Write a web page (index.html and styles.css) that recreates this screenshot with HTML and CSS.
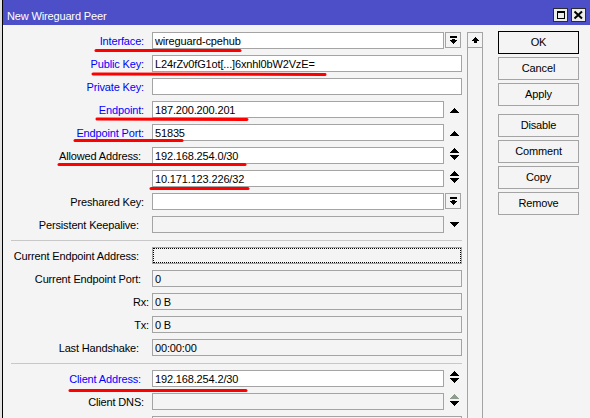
FILE: index.html
```html
<!DOCTYPE html>
<html lang="en">
<head>
<meta charset="utf-8">
<title>New Wireguard Peer</title>
<link rel="stylesheet" href="styles.css">
</head>
<body>
<div class="desk">
  <div class="win">
    <div class="titlebar">
      <span class="title">New Wireguard Peer</span>
      <div class="tbtns">
        <span class="tbtn">
          <svg width="13" height="12" viewBox="0 0 13 12" shape-rendering="crispEdges">
            <rect x="3.5" y="2.5" width="7" height="7" fill="none" stroke="#000"/>
            <rect x="3" y="2" width="8" height="2" fill="#000"/>
          </svg>
        </span>
        <span class="tbtn">
          <svg width="13" height="12" viewBox="0 0 13 12">
            <path d="M2.5 2.5L10 9.5M10 2.5L2.5 9.5" stroke="#000" stroke-width="2" fill="none"/>
          </svg>
        </span>
      </div>
    </div>

    <div class="content">
      <div class="form">
        <div class="row">
          <span class="lbl blue">Interface:</span>
          <div class="field"><span class="inp">wireguard-cpehub</span>
            <span class="side"><span class="dd"><svg width="7" height="8" viewBox="0 0 7 8" shape-rendering="crispEdges"><path d="M0 0h7v2H0z M2 3h3v1H2z M0 4h7v1h-1v1h-1v1h-1v1h-1v-1h-1v-1h-1v-1H0z"/></svg></span></span>
          </div>
        </div>
        <div class="row">
          <span class="lbl blue">Public Key:</span>
          <div class="field"><span class="inp">L24rZv0fG1ot[...]6xnhl0bW2VzE=</span></div>
        </div>
        <div class="row">
          <span class="lbl blue">Private Key:</span>
          <div class="field"><span class="inp"></span></div>
        </div>
        <div class="row">
          <span class="lbl blue">Endpoint:</span>
          <div class="field"><span class="inp">187.200.200.201</span>
            <span class="side"><svg class="arr" width="9" height="17" viewBox="0 0 9 17" shape-rendering="crispEdges"><path d="M4 7h1v1h1v1h1v1h1v1h1v1H0v-1h1v-1h1v-1h1v-1h1z"/></svg></span>
          </div>
        </div>
        <div class="row">
          <span class="lbl blue">Endpoint Port:</span>
          <div class="field"><span class="inp">51835</span>
            <span class="side"><svg class="arr" width="9" height="17" viewBox="0 0 9 17" shape-rendering="crispEdges"><path d="M4 7h1v1h1v1h1v1h1v1h1v1H0v-1h1v-1h1v-1h1v-1h1z"/></svg></span>
          </div>
        </div>
        <div class="row">
          <span class="lbl lbl-m">Allowed Address:</span>
          <div class="field"><span class="inp">192.168.254.0/30</span>
            <span class="side"><svg class="arr" width="9" height="17" viewBox="0 0 9 17" shape-rendering="crispEdges"><path d="M4 1h1v1h1v1h1v1h1v1h1v1H0V5h1V4h1V3h1V2h1z"/><path d="M0 8H9v1h-1v1h-1v1h-1v1h-1v1h-1v-1h-1v-1h-1v-1h-1v-1h-1z"/></svg></span>
          </div>
        </div>
        <div class="row">
          <span class="lbl"></span>
          <div class="field"><span class="inp">10.171.123.226/32</span>
            <span class="side"><svg class="arr" width="9" height="17" viewBox="0 0 9 17" shape-rendering="crispEdges"><path d="M4 1h1v1h1v1h1v1h1v1h1v1H0V5h1V4h1V3h1V2h1z"/><path d="M0 8H9v1h-1v1h-1v1h-1v1h-1v1h-1v-1h-1v-1h-1v-1h-1v-1h-1z"/></svg></span>
          </div>
        </div>
        <div class="row">
          <span class="lbl">Preshared Key:</span>
          <div class="field"><span class="inp"></span>
            <span class="side"><span class="dd"><svg width="7" height="8" viewBox="0 0 7 8" shape-rendering="crispEdges"><path d="M0 0h7v2H0z M2 3h3v1H2z M0 4h7v1h-1v1h-1v1h-1v1h-1v-1h-1v-1h-1v-1H0z"/></svg></span></span>
          </div>
        </div>
        <div class="row">
          <span class="lbl lbl-w">Persistent Keepalive:</span>
          <div class="field"><span class="inp ro"></span>
            <span class="side"><svg class="arr" width="9" height="17" viewBox="0 0 9 17" shape-rendering="crispEdges"><path d="M0 6H9v1h-1v1h-1v1h-1v1h-1v1h-1v-1h-1v-1h-1v-1h-1v-1h-1z"/></svg></span>
          </div>
        </div>

        <div class="sep"></div>

        <div class="row">
          <span class="lbl lbl-w">Current Endpoint Address:</span>
          <div class="field"><span class="inp ro focus"></span></div>
        </div>
        <div class="row">
          <span class="lbl lbl-m">Current Endpoint Port:</span>
          <div class="field"><span class="inp ro">0</span></div>
        </div>
        <div class="row">
          <span class="lbl lbl-n">Rx:</span>
          <div class="field"><span class="inp ro">0 B</span></div>
        </div>
        <div class="row">
          <span class="lbl lbl-n">Tx:</span>
          <div class="field"><span class="inp ro">0 B</span></div>
        </div>
        <div class="row">
          <span class="lbl lbl-w">Last Handshake:</span>
          <div class="field"><span class="inp ro">00:00:00</span></div>
        </div>

        <div class="sep"></div>

        <div class="row">
          <span class="lbl blue lbl-m">Client Address:</span>
          <div class="field"><span class="inp">192.168.254.2/30</span>
            <span class="side"><svg class="arr" width="9" height="17" viewBox="0 0 9 17" shape-rendering="crispEdges"><path d="M4 1h1v1h1v1h1v1h1v1h1v1H0V5h1V4h1V3h1V2h1z"/><path d="M0 8H9v1h-1v1h-1v1h-1v1h-1v1h-1v-1h-1v-1h-1v-1h-1v-1h-1z"/></svg></span>
          </div>
        </div>
        <div class="row">
          <span class="lbl">Client DNS:</span>
          <div class="field"><span class="inp ro"></span>
            <span class="side"><svg class="arr" width="9" height="17" viewBox="0 0 9 17" shape-rendering="crispEdges"><path class="off" d="M4 1h1v1h1v1h1v1h1v1h1v1H0V5h1V4h1V3h1V2h1z"/><path d="M0 8H9v1h-1v1h-1v1h-1v1h-1v1h-1v-1h-1v-1h-1v-1h-1v-1h-1z"/></svg></span>
          </div>
        </div>
        <div class="row">
          <span class="lbl"></span>
          <div class="field"><span class="inp ro"></span></div>
        </div>
      </div>

      <div class="vscroll">
        <span class="sbtn"><svg width="7" height="6" viewBox="0 0 7 6" shape-rendering="crispEdges"><path d="M3 0h1v1h1v1h1v1h1v1H0V3h1V2h1V1h1z M2 4h3v2H2z"/></svg></span>
        <span class="track"></span>
      </div>

      <div class="actions">
        <span class="btn default">OK</span>
        <span class="btn">Cancel</span>
        <span class="btn">Apply</span>
        <span class="btn gap">Disable</span>
        <span class="btn">Comment</span>
        <span class="btn">Copy</span>
        <span class="btn">Remove</span>
      </div>
    </div>
  </div>

  <!-- red marker strokes drawn over the form -->
  <svg class="marks" width="590" height="418" viewBox="0 0 590 418">
    <g stroke="#ff0000" stroke-width="3" stroke-linecap="round" fill="none">
      <path d="M96 50.5L240 50.5"/>
      <path d="M93 74L325 74.5"/>
      <path d="M97 119L247 119.5"/>
      <path d="M75 140.5L182 140.5"/>
      <path d="M59 164.5L245 164.5"/>
      <path d="M151 188.5L248 188.5"/>
      <path d="M70 390.5L246 390.5"/>
    </g>
  </svg>
</div>
</body>
</html>
```

FILE: styles.css
```css
* {
  box-sizing: border-box;
}

html,
body {
  margin: 0;
  padding: 0;
}

body {
  width: 590px;
  height: 418px;
  overflow: hidden;
  background: #e2e2e2;
  font-family: "Liberation Sans", Arial, sans-serif;
  font-size: 11px;
  letter-spacing: -0.15px;
  color: #000;
}

.desk {
  position: relative;
  width: 590px;
  height: 418px;
  padding-left: 2px;
}

/* dialog window */
.win {
  height: 100%;
  border-left: 1px solid #000;
  background: #f4f4f4;
  display: flex;
  flex-direction: column;
}

.titlebar {
  flex: none;
  height: 25px;
  display: flex;
  align-items: flex-start;
  padding: 8px 4px 0 4px;
  background: #4c4fc7;
  color: #fff;
}

.title {
  line-height: 17px;
  white-space: nowrap;
}

.tbtns {
  margin-left: auto;
  display: flex;
  gap: 3px;
}

.tbtn {
  width: 15px;
  height: 14px;
  border: 1px solid #2c2c2c;
  background: #ececec;
  display: block;
}

.tbtn svg {
  display: block;
}

.content {
  flex: 1;
  min-height: 0;
  display: flex;
  align-items: stretch;
}

/* form column */
.form {
  flex: none;
  width: 459px;
  padding-top: 7px;
  display: flex;
  flex-direction: column;
  gap: 6px;
}

.row {
  flex: none;
  height: 17px;
  display: grid;
  grid-template-columns: 141px 310px;
  column-gap: 8px;
}

.lbl {
  display: block;
  text-align: right;
  white-space: nowrap;
  padding-top: 1px;
  line-height: 16px;
}

.lbl.blue {
  color: #0000ff;
}

.lbl-m {
  padding-right: 3px;
}

.lbl-w {
  padding-right: 5px;
}

.lbl-n {
  margin-right: -5px;
}

.field {
  display: flex;
  height: 17px;
}

.inp {
  flex: 1;
  min-width: 0;
  height: 17px;
  display: block;
  border: 1px solid #a4a4a4;
  background: #fff;
  padding: 1px 0 0 2px;
  line-height: 15px;
  white-space: nowrap;
  overflow: hidden;
}

.inp.ro {
  background: #f4f4f4;
}

.inp.focus {
  outline: 1px dotted #000;
  outline-offset: -2px;
}

.side {
  flex: none;
  width: 18px;
  display: flex;
}

.dd {
  margin-left: 1px;
  width: 16px;
  height: 16px;
  border: 1px solid #a4a4a4;
  background: #f4f4f4;
  display: flex;
  align-items: center;
  justify-content: center;
}

.dd svg {
  display: block;
  fill: #000;
}

.arr {
  display: block;
  margin-left: 6px;
  fill: #000;
}

.arr .off {
  fill: #8f9c8f;
}

.sep {
  flex: none;
  height: 1px;
  margin: 1px 0 0 8px;
  background: #c8c8c8;
}

/* vertical scroll bar */
.vscroll {
  flex: none;
  width: 16px;
  margin-left: 5px;
  padding-top: 7px;
  display: flex;
  flex-direction: column;
}

.sbtn {
  flex: none;
  height: 16px;
  border: 1px solid #a4a4a4;
  background: #f4f4f4;
  display: flex;
  align-items: center;
  justify-content: center;
}

.sbtn svg {
  display: block;
  fill: #000;
}

.track {
  flex: 1;
  border-left: 1px solid #a4a4a4;
  border-right: 1px solid #a4a4a4;
}

/* command buttons */
.actions {
  flex: none;
  width: 81px;
  margin-left: 15px;
  padding-top: 6px;
  display: flex;
  flex-direction: column;
  gap: 3px;
}

.btn {
  display: block;
  height: 23px;
  border: 1px solid #a4a4a4;
  background: #f4f4f4;
  text-align: center;
  line-height: 21px;
  white-space: nowrap;
}

.btn.default {
  border-color: #000;
}

.btn.gap {
  margin-top: 5px;
}

.marks {
  position: absolute;
  left: 0;
  top: 0;
  pointer-events: none;
}
```
